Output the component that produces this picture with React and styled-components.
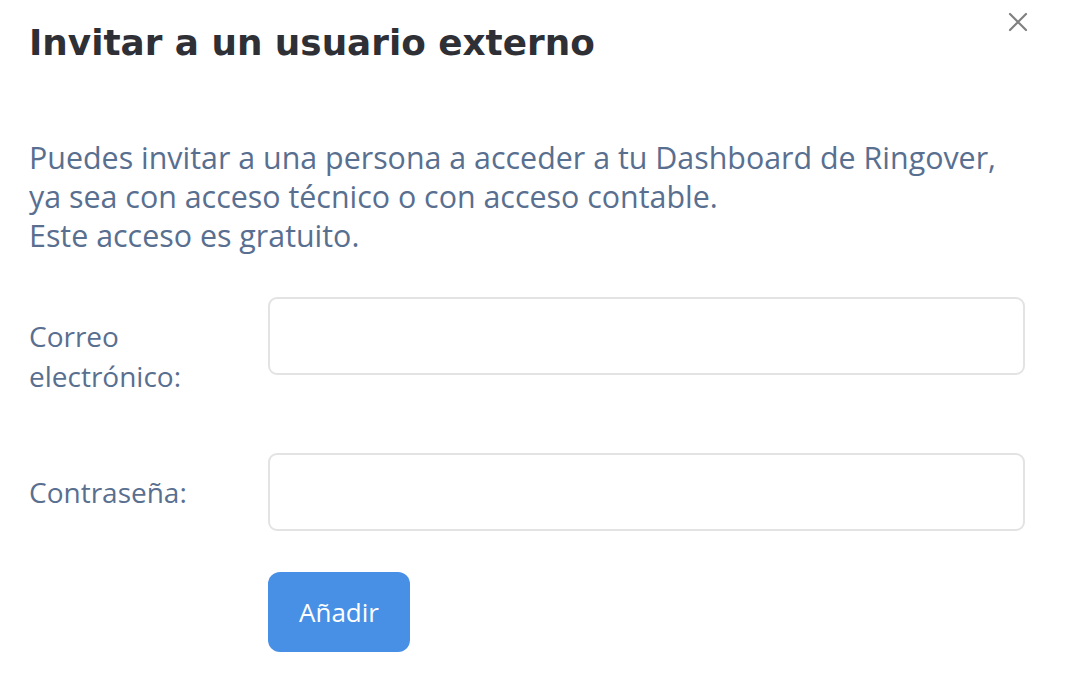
import React from "react";
import styled, { createGlobalStyle } from "styled-components";

const Global = createGlobalStyle`
  html, body { margin: 0; padding: 0; background: #ffffff; }
  body { font-family: "Open Sans", "Noto Sans", sans-serif; }
  * { box-sizing: border-box; }
`;

const Modal = styled.div`
  position: relative;
  width: 1066px;
  height: 674px;
  padding: 20px 41px 0 29px;
  background: #fff;
  overflow: hidden;
`;

const Title = styled.h1`
  margin: 0;
  font-family: "DejaVu Sans", Inter, sans-serif;
  font-weight: 700;
  font-size: 35.8px;
  line-height: 46px;
  color: #2e3036;
`;

const CloseButton = styled.button`
  position: absolute;
  top: 10px;
  right: 36px;
  width: 24px;
  height: 24px;
  padding: 0;
  border: 0;
  background: transparent;
  display: flex;
  align-items: center;
  justify-content: center;
  cursor: pointer;
`;

const Intro = styled.p`
  margin: 72px 0 0 0;
  font-size: 30.4px;
  line-height: 39px;
  color: #596f90;
`;

const Form = styled.form`
  margin-top: 42px;
  display: grid;
  grid-template-columns: 239px 1fr;
  grid-template-rows: 78px 78px auto;
  row-gap: 78px;
`;

const Label = styled.label`
  align-self: start;
  padding-top: 19px;
  font-size: 28px;
  line-height: 40px;
  color: #596f90;
`;

const Input = styled.input`
  height: 78px;
  width: 100%;
  border: 2px solid #e3e3e3;
  border-radius: 9px;
  background: #fff;
  padding: 0 18px;
  font-family: inherit;
  font-size: 24px;
  outline: none;
`;

const Actions = styled.div`
  grid-column: 2;
  margin-top: -37px;
`;

const SubmitButton = styled.button`
  width: 142px;
  height: 80px;
  border: 0;
  border-radius: 12px;
  background: #4790e5;
  color: #ffffff;
  font-family: "Open Sans", sans-serif;
  font-size: 26px;
  cursor: pointer;
`;

export default function App() {
  return (
    <>
      <Global />
      <Modal>
        <CloseButton aria-label="Cerrar">
          <svg width="20" height="20" viewBox="0 0 20 20">
            <path d="M2 2 L18 18 M18 2 L2 18" stroke="#808080" strokeWidth="2.2" strokeLinecap="round" />
          </svg>
        </CloseButton>
        <Title>Invitar a un usuario externo</Title>
        <Intro>
          Puedes invitar a una persona a acceder a tu Dashboard de Ringover,
          <br />
          ya sea con acceso técnico o con acceso contable.
          <br />
          Este acceso es gratuito.
        </Intro>
        <Form onSubmit={(e) => e.preventDefault()}>
          <Label htmlFor="email">
            Correo
            <br />
            electrónico:
          </Label>
          <Input id="email" type="email" />
          <Label htmlFor="password">Contraseña:</Label>
          <Input id="password" type="password" />
          <Actions>
            <SubmitButton type="submit">Añadir</SubmitButton>
          </Actions>
        </Form>
      </Modal>
    </>
  );
}
